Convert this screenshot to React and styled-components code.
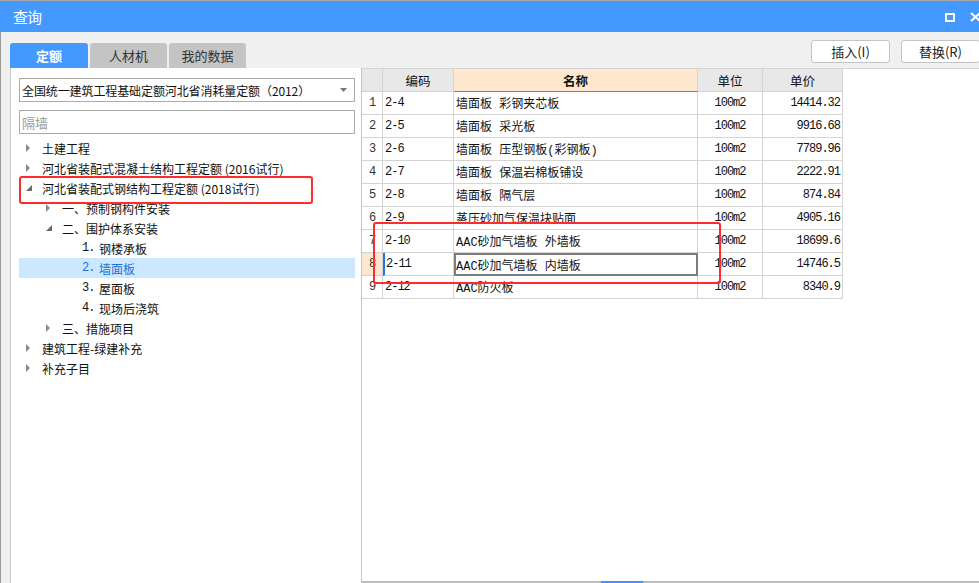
import React from "react";
import styled, { createGlobalStyle } from "styled-components";

const GlobalStyle = createGlobalStyle`
  html, body {
    margin: 0;
    padding: 0;
    overflow: hidden;
    background: #f0f0f0;
  }
  body {
    font-family: "Noto Sans CJK SC", "Liberation Sans", sans-serif;
    color: #222;
  }
`;

const tree = [
  { level: 0, icon: "closed", text: "土建工程" },
  { level: 0, icon: "closed", text: "河北省装配式混凝土结构工程定额 (2016试行)" },
  { level: 0, icon: "open", text: "河北省装配式钢结构工程定额 (2018试行)" },
  { level: 1, icon: "closed", text: "一、预制钢构件安装" },
  { level: 1, icon: "open", text: "二、围护体系安装" },
  { level: 2, num: "1.", text: "钢楼承板" },
  { level: 2, num: "2.", text: "墙面板", selected: true },
  { level: 2, num: "3.", text: "屋面板" },
  { level: 2, num: "4.", text: "现场后浇筑" },
  { level: 1, icon: "closed", text: "三、措施项目" },
  { level: 0, icon: "closed", text: "建筑工程-绿建补充" },
  { level: 0, icon: "closed", text: "补充子目" },
];

const rows = [
  ["2-4", "墙面板 彩钢夹芯板", "14414.32"],
  ["2-5", "墙面板 采光板", "9916.68"],
  ["2-6", "墙面板 压型钢板(彩钢板)", "7789.96"],
  ["2-7", "墙面板 保温岩棉板铺设", "2222.91"],
  ["2-8", "墙面板 隔气层", "874.84"],
  ["2-9", "蒸压砂加气保温块贴面", "4905.16"],
  ["2-10", "AAC砂加气墙板 外墙板", "18699.6"],
  ["2-11", "AAC砂加气墙板 内墙板", "14746.5"],
  ["2-12", "AAC防火板", "8340.9"],
];

function App() {
  return (
    <Window>
      <GlobalStyle />
      <TitleBar>
        <Title>查询</Title>
        <TitleIcons>
          <svg width="10" height="9" viewBox="0 0 10 9">
            <rect x="1" y="1" width="8" height="7" fill="none" stroke="#fff" strokeWidth="2" />
          </svg>
          <svg width="11" height="10" viewBox="0 0 11 10">
            <path d="M1 1 L10 9 M10 1 L1 9" stroke="#fff" strokeWidth="2" />
          </svg>
        </TitleIcons>
      </TitleBar>
      <Body>
        <Toolbar>
          <Tabs>
            <Tab active>定额</Tab>
            <Tab>人材机</Tab>
            <Tab>我的数据</Tab>
          </Tabs>
          <Buttons>
            <Button>插入(I)</Button>
            <Button>替换(R)</Button>
          </Buttons>
        </Toolbar>
        <Main>
          <LeftPanel>
            <Select>
              <span>全国统一建筑工程基础定额河北省消耗量定额（2012）</span>
              <svg width="7" height="4" viewBox="0 0 7 4">
                <path d="M0 0 L7 0 L3.5 4 Z" fill="#777" />
              </svg>
            </Select>
            <Search>隔墙</Search>
            <Tree>
              {tree.map((item, i) => (
                <TreeRow key={i} level={item.level} selected={item.selected}>
                  <Toggle>
                    {item.icon === "closed" && (
                      <svg width="4" height="8" viewBox="0 0 4 8">
                        <path d="M0 0 L4 4 L0 8 Z" fill="#8a8a8a" />
                      </svg>
                    )}
                    {item.icon === "open" && (
                      <svg width="6" height="6" viewBox="0 0 6 6">
                        <path d="M6 0 L6 6 L0 6 Z" fill="#6a6a6a" />
                      </svg>
                    )}
                  </Toggle>
                  {item.num && <Num>{item.num}</Num>}
                  <span>{item.text}</span>
                </TreeRow>
              ))}
              <Highlight style={{ top: 38, left: 0, width: 294, height: 28 }} />
            </Tree>
          </LeftPanel>
          <RightPanel>
            <Grid>
              <HeadCell />
              <HeadCell>编码</HeadCell>
              <HeadCell name>名称</HeadCell>
              <HeadCell>单位</HeadCell>
              <HeadCell>单价</HeadCell>
              {rows.map((r, i) => {
                const sel = i === 7;
                return (
                  <React.Fragment key={r[0]}>
                    <IndexCell selected={sel}>{i + 1}</IndexCell>
                    <CodeCell selected={sel}>{r[0]}</CodeCell>
                    <NameCell editing={sel}>{r[1]}</NameCell>
                    <UnitCell>100m2</UnitCell>
                    <PriceCell>{r[2]}</PriceCell>
                  </React.Fragment>
                );
              })}
              <Highlight style={{ top: 153, left: 11, width: 348, height: 62 }} />
            </Grid>
            <ScrollBar>
              <Thumb />
            </ScrollBar>
          </RightPanel>
        </Main>
      </Body>
    </Window>
  );
}

const Window = styled.div`
  width: 979px;
  height: 583px;
  display: flex;
  flex-direction: column;
  overflow: hidden;
  background: #f0f0f0;
`;

const TitleBar = styled.div`
  height: 31px;
  border-top: 1px solid #a8a8a8;
  background: #4499ff;
  display: flex;
  align-items: center;
  justify-content: space-between;
  padding-left: 13px;
  flex-shrink: 0;
`;

const Title = styled.div`
  color: #fff;
  font-size: 15px;
  letter-spacing: -1px;
`;

const TitleIcons = styled.div`
  display: flex;
  align-items: center;
  gap: 15px;
  margin-right: -2px;
  margin-top: 1px;
`;

const Body = styled.div`
  flex: 1;
  display: flex;
  flex-direction: column;
  border-left: 1px solid #9c9c9c;
  min-height: 0;
`;

const Toolbar = styled.div`
  height: 36px;
  display: flex;
  justify-content: space-between;
  flex-shrink: 0;
`;

const Tabs = styled.div`
  display: flex;
  gap: 2px;
  padding-left: 9px;
  padding-top: 11px;
`;

const Tab = styled.div`
  width: ${(p) => (p.active ? "78px" : "77px")};
  height: 25px;
  border-radius: 3px 3px 0 0;
  display: flex;
  align-items: center;
  justify-content: center;
  font-size: 13px;
  font-weight: ${(p) => (p.active ? 700 : 400)};
  background: ${(p) => (p.active ? "#4499ff" : "#c4c4c4")};
  color: ${(p) => (p.active ? "#fff" : "#333")};
`;

const Buttons = styled.div`
  display: flex;
  gap: 11px;
  padding-top: 8px;
  margin-right: -1px;
`;

const Button = styled.div`
  width: 77px;
  height: 21px;
  border: 1px solid #c4c4c4;
  border-radius: 3px;
  background: #fff;
  font-size: 13px;
  display: flex;
  align-items: center;
  justify-content: center;
  color: #222;
`;

const Main = styled.div`
  flex: 1;
  display: flex;
  min-height: 0;
`;

const LeftPanel = styled.div`
  width: 352px;
  margin-left: 9px;
  background: #fff;
  border-left: 1px solid #c8c8c8;
  border-right: 1px solid #c8c8c8;
  padding: 10px 6px 0 8px;
  box-sizing: border-box;
  display: flex;
  flex-direction: column;
`;

const Select = styled.div`
  height: 24px;
  border: 1px solid #ababab;
  box-sizing: border-box;
  display: flex;
  align-items: center;
  justify-content: space-between;
  padding: 0 7px 0 2px;
  font-size: 12px;
  color: #111;
  span {
    letter-spacing: -0.1px;
  }
`;

const Search = styled.div`
  height: 24px;
  margin-top: 8px;
  border: 1px solid #ababab;
  box-sizing: border-box;
  display: flex;
  align-items: center;
  padding-left: 2px;
  font-size: 13px;
  color: #9a9a9a;
`;

const Tree = styled.div`
  position: relative;
  margin-top: 4px;
`;

const TreeRow = styled.div`
  height: 20px;
  display: flex;
  align-items: center;
  padding-left: ${(p) => p.level * 20 + 5}px;
  font-size: 12px;
  background: ${(p) => (p.selected ? "#cce8ff" : "transparent")};
  color: ${(p) => (p.selected ? "#1e6fd6" : "#111")};
  white-space: nowrap;
`;

const Toggle = styled.div`
  width: 18px;
  display: flex;
  align-items: center;
  justify-content: flex-start;
  padding-left: 2px;
  box-sizing: border-box;
`;

const Num = styled.span`
  width: 17px;
  font-family: "Liberation Mono", monospace;
  letter-spacing: -1px;
`;

const Highlight = styled.div`
  position: absolute;
  border: 2px solid #ff2a2a;
  border-radius: 3px;
  box-sizing: border-box;
  pointer-events: none;
`;

const RightPanel = styled.div`
  flex: 1;
  background: #fff;
  border-top: 1px solid #d4d4d4;
  display: flex;
  flex-direction: column;
  justify-content: space-between;
`;

const Grid = styled.div`
  position: relative;
  display: grid;
  grid-template-columns: 21px 71px 244px 65px 80px;
  grid-auto-rows: 23px;
  width: 481px;
  font-size: 12px;
`;

const Cell = styled.div`
  border-right: 1px solid #d4d4d4;
  border-bottom: 1px solid #d4d4d4;
  box-sizing: border-box;
  display: flex;
  align-items: center;
  white-space: nowrap;
  overflow: hidden;
  color: #111;
`;

const HeadCell = styled(Cell)`
  justify-content: center;
  background: ${(p) => (p.name ? "#fde8cf" : "#e8e8e8")};
  font-weight: ${(p) => (p.name ? 700 : 400)};
  border-bottom: 1px solid ${(p) => (p.name ? "#3d8fe8" : "#d4d4d4")};
  font-size: 12.5px;
`;

const Mono = styled(Cell)`
  font-family: "Liberation Mono", monospace;
  letter-spacing: -1px;
`;

const IndexCell = styled(Mono)`
  justify-content: center;
  background: ${(p) => (p.selected ? "#fde8cf" : "#fff")};
  color: #333;
`;

const CodeCell = styled(Mono)`
  padding-left: ${(p) => (p.selected ? "1px" : "2px")};
  border-left: ${(p) => (p.selected ? "2px solid #2372e6" : "none")};
`;

const NameCell = styled(Cell)`
  font-family: "Liberation Mono", "Noto Sans CJK SC", monospace;
  white-space: pre;
  padding-left: ${(p) => (p.editing ? "0" : "2px")};
  border-style: solid;
  border-width: ${(p) => (p.editing ? "2px" : "0 1px 1px 0")};
  border-color: ${(p) => (p.editing ? "#7c7c7c" : "#d4d4d4")};
`;

const UnitCell = styled(Mono)`
  justify-content: center;
`;

const PriceCell = styled(Mono)`
  justify-content: flex-end;
  padding-right: 2px;
`;

const ScrollBar = styled.div`
  height: 2px;
  background: #bcbcbc;
`;

const Thumb = styled.div`
  margin-left: 239px;
  width: 42px;
  height: 3px;
  background: #3e95ff;
`;

export default App;
